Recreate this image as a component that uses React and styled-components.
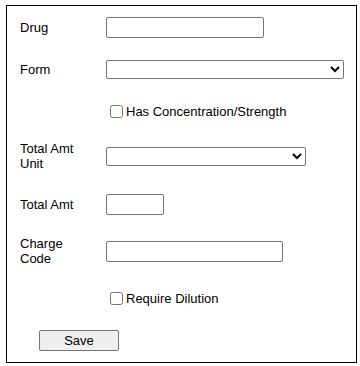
import React from "react";
import styled, { createGlobalStyle } from "styled-components";

const GlobalStyle = createGlobalStyle`
  body {
    margin: 0;
    background: #fff;
    font-family: "Liberation Sans", Arial, sans-serif;
    font-size: 13px;
    color: #000;
  }
`;

function DrugForm() {
  return (
    <Box>
      <Row $h={42}>
        <Label>Drug</Label>
        <TextInput $w={158} />
      </Row>
      <Row $h={42}>
        <Label>Form</Label>
        <Select $w={238}>
          <option></option>
        </Select>
      </Row>
      <Row $h={42}>
        <span />
        <Check>
          <input type="checkbox" />
          Has Concentration/Strength
        </Check>
      </Row>
      <Row $h={48}>
        <Label>Total Amt Unit</Label>
        <Select $w={200}>
          <option></option>
        </Select>
      </Row>
      <Row $h={48}>
        <Label>Total Amt</Label>
        <TextInput $w={58} />
      </Row>
      <Row $h={46}>
        <Label>Charge Code</Label>
        <TextInput $w={177} />
      </Row>
      <Row $h={48}>
        <span />
        <Check>
          <input type="checkbox" />
          Require Dilution
        </Check>
      </Row>
      <ButtonRow>
        <SaveButton>Save</SaveButton>
      </ButtonRow>
    </Box>
  );
}

export default function App() {
  return (
    <>
      <GlobalStyle />
      <DrugForm />
    </>
  );
}

const Box = styled.div`
  box-sizing: border-box;
  width: 351px;
  height: 358px;
  margin: 5px 0 0 6px;
  border: 1px solid #000;
  padding-left: 13px;
  display: flex;
  flex-direction: column;
`;

const Row = styled.div`
  height: ${(p) => p.$h}px;
  display: grid;
  grid-template-columns: 86px 1fr;
  align-items: center;
`;

const Label = styled.div`
  width: 66px;
  line-height: 15px;
`;

const TextInput = styled.input`
  box-sizing: border-box;
  width: ${(p) => p.$w}px;
  height: 21px;
  margin: 0;
  padding: 1px 2px;
  border: 1px solid #767676;
  border-radius: 2px;
  font: 13px "Liberation Sans", Arial, sans-serif;
  background: #fff;
`;

const Select = styled.select`
  box-sizing: border-box;
  width: ${(p) => p.$w}px;
  height: 19px;
  margin: 0;
  font: 13px "Liberation Sans", Arial, sans-serif;
  color: #000;
  border: 1px solid #767676;
  border-radius: 2px;
  background: #fff;
`;

const Check = styled.label`
  display: flex;
  align-items: center;
  line-height: 15px;

  input {
    width: 13px;
    height: 13px;
    margin: 3px 3px 3px 4px;
  }
`;

const ButtonRow = styled.div`
  height: 36px;
  display: flex;
  align-items: center;
  padding-left: 19px;
`;

const SaveButton = styled.button`
  box-sizing: border-box;
  width: 80px;
  height: 21px;
  margin: 0;
  padding: 0;
  font: 13px "Liberation Sans", Arial, sans-serif;
  color: #000;
  background: #efefef;
  border: 1px solid #767676;
  border-radius: 2px;
`;
